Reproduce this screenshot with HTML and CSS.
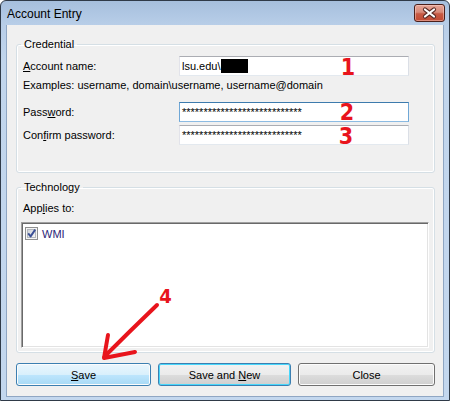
FILE: index.html
```html
<!DOCTYPE html>
<html>
<head>
<meta charset="utf-8">
<title>Account Entry</title>
<link rel="stylesheet" href="styles.css">
</head>
<body>
<div class="window">
  <div class="titlebar">
    <span class="title">Account Entry</span>
    <span class="close-btn">
      <svg width="29" height="16" viewBox="0 0 29 16">
        <path d="M10,4.5 L19,11.5 M19,4.5 L10,11.5" stroke="#5a2a24" stroke-width="4.2" stroke-linecap="round" fill="none"/>
        <path d="M10,4.5 L19,11.5 M19,4.5 L10,11.5" stroke="#ffffff" stroke-width="2.2" stroke-linecap="round" fill="none"/>
      </svg>
    </span>
  </div>
  <div class="client">
    <fieldset class="group group-cred">
      <legend>Credential</legend>
      <div class="form">
        <div class="row row-account">
          <span class="label"><u>A</u>ccount name:</span>
          <div class="field"><span>lsu.edu\</span><span class="redact"></span></div>
        </div>
        <div class="hint">Examples: username, domain\username, username@domain</div>
        <div class="row row-pw">
          <span class="label">Pass<u>w</u>ord:</span>
          <div class="field field-focus"><span class="stars">****************************</span></div>
        </div>
        <div class="row row-confirm">
          <span class="label">Con<u>f</u>irm password:</span>
          <div class="field"><span class="stars">****************************</span></div>
        </div>
      </div>
    </fieldset>
    <fieldset class="group group-tech">
      <legend>Technology</legend>
      <div class="applies">App<u>l</u>ies to:</div>
      <div class="listbox">
        <div class="item">
          <svg class="checkbox" width="13" height="13" viewBox="0 0 13 13">
            <defs>
              <linearGradient id="cbg" x1="0" y1="0" x2="1" y2="1">
                <stop offset="0" stop-color="#cfd3d9"/>
                <stop offset="1" stop-color="#f7f7f7"/>
              </linearGradient>
            </defs>
            <rect x="0.5" y="0.5" width="12" height="12" fill="#f5f5f5" stroke="#8e8f8f"/>
            <rect x="2.5" y="2.5" width="8" height="8" fill="url(#cbg)" stroke="#b4b8bd"/>
            <path d="M3.2,6.4 L5.6,9.4 L10.2,2.6" stroke="#3a4f95" stroke-width="1.9" fill="none" stroke-linejoin="round"/>
          </svg>
          <span class="item-text">WMI</span>
        </div>
      </div>
    </fieldset>
    <div class="buttons">
      <button class="btn btn-hover"><u>S</u>ave</button>
      <button class="btn btn-default">Save and <u>N</u>ew</button>
      <button class="btn">Close</button>
    </div>
  </div>
</div>
<svg class="annotations" width="450" height="401" viewBox="0 0 450 401">
  <g class="annot-num" fill="#e8141c" text-anchor="middle">
    <text x="348" y="75">1</text>
    <text x="347" y="120">2</text>
    <text x="346" y="144">3</text>
    <text x="165.5" y="303" class="annot-small">4</text>
  </g>
  <path d="M157,305 Q130,331 104,357 M108,335 L104,358 L135,352" stroke="#e8141c" stroke-width="4" fill="none" stroke-linecap="round" stroke-linejoin="round"/>
</svg>
</body>
</html>
```
FILE: styles.css
```css
* { box-sizing: border-box; }
html, body { margin: 0; padding: 0; background: #ffffff; }
body {
  position: relative;
  width: 450px;
  height: 401px;
  overflow: hidden;
  font-family: "Liberation Sans", Arial, sans-serif;
  font-size: 11px;
  font-weight: 400;
  color: #000;
}
u { text-decoration: underline; text-underline-offset: 1px; }

.window {
  width: 450px;
  height: 401px;
  border: 1px solid #2f3a48;
  border-radius: 6px 6px 0 0;
  background: linear-gradient(to bottom, #a6bfdd 0px, #b8cee8 24px, #c1d5ec 60px, #c3d7ee 100%);
  padding: 0 5px 3px 5px;
  display: flex;
  flex-direction: column;
}

.titlebar {
  height: 24px;
  margin: 0 -5px;
  padding: 0 4px 0 6px;
  display: flex;
  align-items: flex-start;
  justify-content: space-between;
  flex: none;
}
.title {
  font-size: 12px;
  line-height: 14px;
  margin-top: 6px;
  color: #000;
}
.close-btn {
  width: 31px;
  height: 18px;
  margin-top: 3px;
  border: 1px solid #4b1f1a;
  border-radius: 3px;
  background: linear-gradient(to bottom, #e7a597 0%, #d88a79 45%, #c75a44 55%, #c24a33 100%);
  box-shadow: inset 0 0 0 1px rgba(255, 220, 210, 0.45);
  display: flex;
  align-items: center;
  justify-content: center;
}
.close-btn svg { display: block; }

.client {
  flex: 1;
  background: #f0f0f0;
  border: 1px solid #8fa6c3;
  border-top: none;
  padding: 0 8px 0 9px;
  display: flex;
  flex-direction: column;
}

.group {
  margin: 0;
  padding: 0;
  min-width: 0;
  border: 1px solid #d5dfe5;
  border-radius: 3px;
  box-shadow: inset 0 0 0 1px #ffffff;
}
.group legend {
  margin-left: 4px;
  padding: 0 3px;
  line-height: 14px;
  font-size: 11px;
}
.group-cred { margin-top: 12px; }
.group-tech { margin-top: 7px; padding-bottom: 4px; }

.form {
  padding: 5px 0 27px 6px;
}
.row {
  display: grid;
  grid-template-columns: 156px 230px;
  align-items: center;
  height: 20px;
}
.row-pw { margin-top: 10px; }
.row-confirm { margin-top: 3px; }
.label { line-height: 14px; }
.hint {
  margin-top: 2px;
  line-height: 14px;
}

.field {
  height: 20px;
  background: #fff;
  border: 1px solid;
  border-color: #abadb3 #dbdfe6 #e3e9ef #e2e3ea;
  padding-left: 2px;
  display: flex;
  align-items: center;
  line-height: 14px;
}
.field-focus {
  border-color: #3d7bad #6fa7d6 #8cbbe2 #6fa7d6;
}
.redact {
  width: 27px;
  height: 14px;
  background: #000;
  margin-left: 0;
}
.stars { letter-spacing: 0; }

.applies {
  margin-top: 7px;
  padding-left: 6px;
  line-height: 14px;
}
.listbox {
  margin: 7px 0 0 4px;
  width: 408px;
  height: 126px;
  background: #fff;
  border: 1px solid;
  border-color: #a0a0a0 #ffffff #ffffff #a0a0a0;
  box-shadow: inset 1px 1px 0 #696969, inset -1px -1px 0 #e3e3e3;
  padding: 4px 0 0 3px;
}
.item {
  display: flex;
  align-items: center;
  gap: 4px;
  height: 13px;
}
.checkbox { display: block; flex: none; }
.item-text { color: #2c2478; line-height: 14px; }

.buttons {
  margin-top: 10px;
  display: grid;
  grid-template-columns: 135px 133px 137px;
  column-gap: 7px;
}
.btn {
  height: 23px;
  margin: 0;
  padding: 0;
  font-family: "Liberation Sans", Arial, sans-serif;
  font-size: 11px;
  font-weight: 400;
  color: #000;
  border: 1px solid #707070;
  border-radius: 3px;
  background: linear-gradient(to bottom, #f2f2f2 0%, #ebebeb 50%, #dddddd 51%, #cfcfcf 100%);
  box-shadow: inset 0 0 0 1px #fcfcfc;
}
.btn-hover {
  border-color: #3c7fb1;
  background: linear-gradient(to bottom, #eaf6fd 0%, #d9f0fc 50%, #bee6fd 51%, #a7d9f5 100%);
}
.btn-default {
  border-color: #3c7fb1;
  box-shadow: inset 0 0 0 1px #48d7fb;
}

.annotations {
  position: absolute;
  top: 0;
  left: 0;
  pointer-events: none;
}
.annot-num {
  font-family: "DejaVu Sans Condensed", "DejaVu Sans", sans-serif;
  font-weight: bold;
  font-size: 23px;
}
.annot-small { font-size: 20px; }
```
